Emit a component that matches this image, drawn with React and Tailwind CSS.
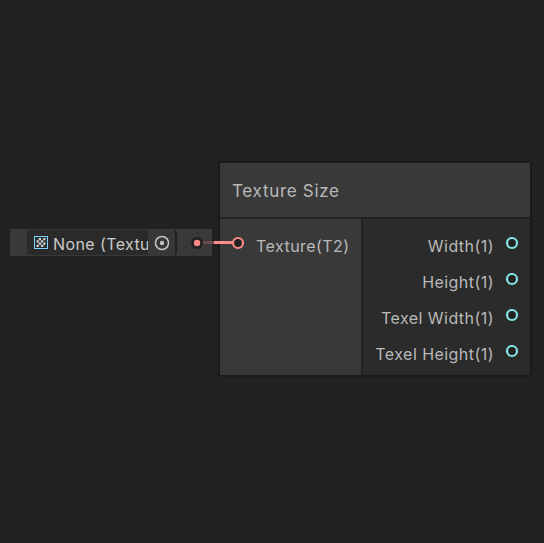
const outputs = ["Width(1)", "Height(1)", "Texel Width(1)", "Texel Height(1)"];

function Port({ color }) {
  return (
    <svg className="block size-3.5 shrink-0" viewBox="0 0 14 14">
      <circle cx="7" cy="7" r="5" fill="#212121" stroke={color} strokeWidth="2.2" />
    </svg>
  );
}

function TextureIcon() {
  const cells = [];
  for (let y = 0; y < 4; y++) {
    for (let x = 0; x < 4; x++) {
      if ((x + y) % 2 === 1) cells.push([x, y]);
    }
  }
  return (
    <svg className="block h-[13px] w-3.5 shrink-0" viewBox="0 0 14 13">
      <rect x="0.5" y="0.5" width="13" height="12" fill="#242a2d" stroke="#7fd6fd" />
      <rect x="2.5" y="2" width="9" height="9" fill="#343434" />
      {cells.map(([x, y]) => (
        <rect key={`${x}${y}`} x={2.5 + x * 2.25} y={2 + y * 2.25} width="2.25" height="2.25" fill="#d0d0d0" />
      ))}
    </svg>
  );
}

function ObjectField() {
  return (
    <div className="mt-[68px] flex h-[27px] w-[202px] shrink-0 items-center bg-[#393939] pl-[17px]">
      <div className="flex h-[25px] w-[150px] items-center overflow-hidden rounded-[3px] border-r-2 border-[#212121] bg-[#2a2a2a] pl-[7px]">
        <TextureIcon />
        <span className="ml-[5px] mt-[3px] w-[95px] shrink-0 overflow-hidden whitespace-nowrap text-[16px] leading-6 tracking-[0.4px] text-[#cacaca]">
          None (Textu
        </span>
        <span className="flex h-[25px] w-[27px] shrink-0 items-center justify-center bg-[#373737]">
          <svg className="block size-4" viewBox="0 0 16 16">
            <circle cx="8" cy="8" r="6.5" fill="none" stroke="#c4c4c4" strokeWidth="1.6" />
            <circle cx="8" cy="8" r="2.2" fill="#c4c4c4" />
          </svg>
        </span>
      </div>
    </div>
  );
}

function Node() {
  return (
    <div className="ml-1.5 h-[216px] w-[314px] shrink-0 rounded-[3px] border-2 border-[#1a1a1a] bg-[#222222] text-[16px] text-[#b9b9b9]">
      <div className="flex h-[54px] items-center bg-[#393939] pl-3 pt-[3px] text-[17px] tracking-[0.7px]">
        Texture Size
      </div>
      <div className="mt-0.5 flex h-[156px] gap-0.5">
        <div className="w-[141px] bg-[#393939] pl-[11px] pt-[9px]">
          <div className="flex h-9 items-start">
            <span className="mt-2">
              <Port color="#fb8b8b" />
            </span>
            <span className="ml-[11px] mt-1.5 whitespace-nowrap leading-6 tracking-[0.45px]">Texture(T2)</span>
          </div>
        </div>
        <div className="w-[167px] bg-[#2b2b2b] pr-[11px] pt-[9px]">
          {outputs.map((label) => (
            <div key={label} className="flex h-9 items-start justify-end">
              <span className="mt-1.5 whitespace-nowrap leading-6 tracking-[0.45px]">{label}</span>
              <span className="ml-[11px] mt-2">
                <Port color="#84e4e7" />
              </span>
            </div>
          ))}
        </div>
      </div>
    </div>
  );
}

export default function App() {
  return (
    <div className="relative h-[543px] w-[544px] overflow-hidden bg-[#212121] font-['Inter',sans-serif]">
      <div className="flex items-start pl-2.5 pt-[161px]">
        <ObjectField />
        <Node />
      </div>
      <svg className="absolute left-[188px] top-[234px] h-[18px] w-[46px]" viewBox="0 0 46 18">
        <path d="M14 8.5H26" stroke="#6b4c4c" strokeWidth="3" />
        <path d="M26 8.5H45" stroke="#fb8b8b" strokeWidth="3" />
        <circle cx="9" cy="9" r="6" fill="#212121" />
        <circle cx="9" cy="9" r="3.2" fill="#fb8b8b" />
      </svg>
    </div>
  );
}
